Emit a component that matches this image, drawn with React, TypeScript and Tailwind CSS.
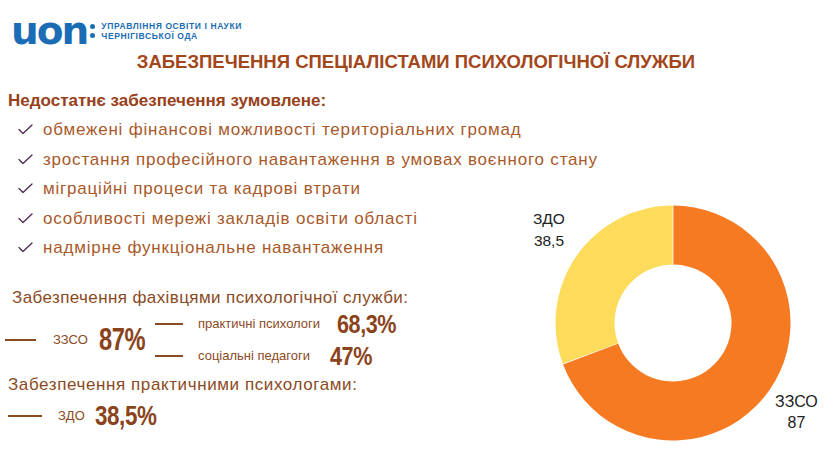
import React from "react";

const bullets = [
  "обмежені фінансові можливості територіальних громад",
  "зростання професійного навантаження в умовах воєнного стану",
  "міграційні процеси та кадрові втрати",
  "особливості мережі закладів освіти області",
  "надмірне функціональне навантаження",
];

const SANS = "font-['Liberation_Sans','Noto_Sans',sans-serif]";

// donut: center (120,120) outer r 117.5, inner r 58.5
const polar = (r: number, deg: number) => {
  const a = (deg * Math.PI) / 180;
  return [120 + r * Math.sin(a), 120 - r * Math.cos(a)];
};

const arc = (from: number, to: number, ro: number, ri: number) => {
  const [x1, y1] = polar(ro, from);
  const [x2, y2] = polar(ro, to);
  const [x3, y3] = polar(ri, to);
  const [x4, y4] = polar(ri, from);
  const large = to - from > 180 ? 1 : 0;
  return `M${x1} ${y1} A${ro} ${ro} 0 ${large} 1 ${x2} ${y2} L${x3} ${y3} A${ri} ${ri} 0 ${large} 0 ${x4} ${y4} Z`;
};

const Check = () => (
  <svg width="15" height="11" viewBox="0 0 15 11" fill="none" className="shrink-0">
    <path d="M1 5.5 L5 9.5 L14 1" stroke="#4b2a4e" strokeWidth="1.3" strokeLinecap="round" strokeLinejoin="round" />
  </svg>
);

const Dash = ({ w }: { w: string }) => <div className={`${w} h-[2px] shrink-0 bg-[#8a4a22]`} />;

const Label = ({ children, className = "" }: { children: React.ReactNode; className?: string }) => (
  <span className={`text-[13px] whitespace-nowrap text-[#8b4a24] ${className}`}>{children}</span>
);

// condensed bold figures: Liberation Sans squeezed horizontally
const Big = ({ children, size, wide = false }: { children: React.ReactNode; size: string; wide?: boolean }) => (
  <span
    className={`inline-block origin-left font-bold leading-[32px] tracking-[-0.5px] text-[#8a431a] ${
      wide ? "scale-x-[0.83]" : "scale-x-[0.74]"
    } ${size}`}
  >
    {children}
  </span>
);

const Donut = () => {
  const total = 87 + 38.5;
  const split = (87 / total) * 360;
  return (
    <svg width="240" height="240" viewBox="0 0 240 240">
      <path d={arc(0, split, 117.5, 58.5)} fill="#f57a22" />
      <path d={arc(split, 360, 117.5, 58.5)} fill="#fddc5c" />
      <line x1="120" y1="2.5" x2="120" y2="61.5" stroke="#fff" strokeWidth="0.8" />
      <path d={arc(split - 0.2, split + 0.2, 117.5, 58.5)} fill="#fff" />
    </svg>
  );
};

export default function App() {
  return (
    <div className={`w-[832px] h-[456px] overflow-hidden bg-white ${SANS}`}>
      {/* Logo */}
      <div className="flex items-center pt-[20px] pl-[11px] h-[41px]">
        <span className="text-[39px] leading-[20px] font-bold tracking-[-2px] text-[#1a6db4] font-['DejaVu_Sans',sans-serif]">
          uon
        </span>
        <div className="ml-[3px] flex flex-col gap-[4px]">
          <div className="size-[5px] rounded-full bg-[#1a6db4]" />
          <div className="size-[5px] rounded-full bg-[#1a6db4]" />
        </div>
        <div className="ml-[6px] flex flex-col text-[8.5px] leading-[10px] font-bold tracking-[0.6px] text-[#1a6db4]">
          <span>УПРАВЛІННЯ ОСВІТИ І НАУКИ</span>
          <span>ЧЕРНІГІВСЬКОЇ ОДА</span>
        </div>
      </div>

      {/* Title */}
      <h1 className="mt-[10px] text-center text-[18.5px] leading-[22px] font-bold text-[#a3461a]">
        ЗАБЕЗПЕЧЕННЯ СПЕЦІАЛІСТАМИ ПСИХОЛОГІЧНОЇ СЛУЖБИ
      </h1>

      <div className="flex">
        {/* Left column */}
        <div className="w-[525px] shrink-0">
          <div className="mt-[18px] pl-[8px] text-[17px] leading-[20px] font-bold text-[#98401a] whitespace-nowrap">
            Недостатнє забезпечення зумовлене:
          </div>
          <ul className="mt-[4px]">
            {bullets.map((b) => (
              <li key={b} className="flex items-center h-[29.5px] pl-[18px] gap-[10px]">
                <Check />
                <span className="text-[17px] tracking-[0.8px] text-[#a9592a] whitespace-nowrap">{b}</span>
              </li>
            ))}
          </ul>

          <div className="mt-[25px] pl-[12px] text-[17px] leading-[20px] tracking-[0.4px] text-[#8b4a24] whitespace-nowrap">
            Забезпечення фахівцями психологічної служби:
          </div>
          <div className="flex items-center">
            <div className="flex items-center pl-[5px]">
              <Dash w="w-[31px]" />
              <Label className="ml-[17px] w-[46px]">ЗЗСО</Label>
              <div className="w-[56px]">
                <Big size="text-[32px]">87%</Big>
              </div>
            </div>
            <div className="flex flex-col">
              <div className="flex items-center h-[32px]">
                <Dash w="w-[28px]" />
                <Label className="ml-[15px] w-[139px]">практичні психологи</Label>
                <Big size="text-[26px]" wide>68,3%</Big>
              </div>
              <div className="flex items-center h-[32px]">
                <Dash w="w-[28px]" />
                <Label className="ml-[15px] w-[132px]">соціальні педагоги</Label>
                <Big size="text-[26px]" wide>47%</Big>
              </div>
            </div>
          </div>

          <div className="mt-[3px] pl-[8px] text-[17px] leading-[20px] tracking-[0.6px] text-[#8b4a24] whitespace-nowrap">
            Забезпечення практичними психологами:
          </div>
          <div className="mt-[5px] flex items-center h-[32px] pl-[8px]">
            <Dash w="w-[34px]" />
            <Label className="ml-[16px] w-[37px]">ЗДО</Label>
            <Big size="text-[27px]" wide>38,5%</Big>
          </div>
        </div>

        {/* Chart */}
        <div className="relative flex-1">
          <div className="mt-[129.5px] ml-[27.5px] w-[240px]">
            <Donut />
          </div>
          <div className="absolute left-[8px] top-[135px] flex flex-col items-center text-[15.5px] leading-[22px] text-[#222]">
            <span>ЗДО</span>
            <span>38,5</span>
          </div>
          <div className="absolute left-[250px] top-[318px] flex flex-col items-center text-[16px] leading-[21px] text-[#222]">
            <span>ЗЗСО</span>
            <span>87</span>
          </div>
        </div>
      </div>
    </div>
  );
}
